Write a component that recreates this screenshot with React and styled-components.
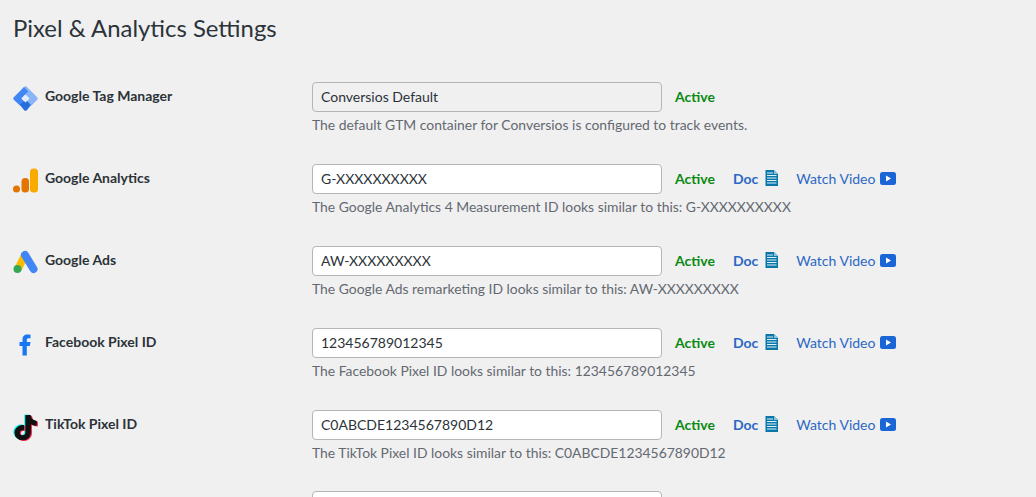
import React from 'react';
import styled, { createGlobalStyle } from 'styled-components';

const GlobalStyle = createGlobalStyle`
  html, body {
    margin: 0;
    height: 100%;
    overflow: hidden;
    background: #f0f0f1;
    font-family: Lato, "Open Sans", sans-serif;
  }
`;

const Page = styled.div`
  height: 497px;
  overflow: hidden;
  padding: 13px 0 0 13px;
  box-sizing: border-box;
`;

const Title = styled.h2`
  margin: 0 0 39px;
  font-size: 23.9px;
  line-height: 30px;
  font-weight: 400;
  color: #2c3338;
`;

const Row = styled.div`
  display: grid;
  grid-template-columns: 299px 1fr;
  height: 82px;
`;

const LastRow = styled(Row)`
  margin-top: -1px;
`;

const Label = styled.div`
  display: flex;
  align-items: flex-start;
  gap: 7px;
  font-size: 14px;
  font-weight: 700;
  line-height: 28px;
  color: #2c3338;
`;

const IconSlot = styled.span`
  width: 25px;
  height: 25px;
  margin-top: 4px;
  display: flex;
  align-items: center;
  justify-content: center;

  svg {
    overflow: visible;
  }
`;

const FieldLine = styled.div`
  display: flex;
  align-items: center;
  height: 30px;
`;

const Input = styled.input`
  width: 350px;
  height: 30px;
  box-sizing: border-box;
  padding: 0 8px 2px;
  border: 1px solid #b5b5b5;
  border-radius: 4px;
  font-family: inherit;
  font-size: 14px;
  color: #2c3338;
  background: ${({ disabled }) => (disabled ? '#f0f0f1' : '#fff')};
  opacity: 1;
`;

const Status = styled.span`
  margin: 0 0 2px 13px;
  font-size: 14px;
  font-weight: 700;
  color: #0a8a12;
`;

const DocLink = styled.a`
  margin: 0 0 2px 18px;
  display: flex;
  align-items: center;
  gap: 7px;
  font-size: 14px;
  font-weight: 700;
  color: #2b68c4;
`;

const VideoLink = styled.a`
  margin: 0 0 2px 18px;
  display: flex;
  align-items: center;
  gap: 5px;
  font-size: 14px;
  color: #2b68c4;
`;

const Help = styled.p`
  margin: 4px 0 0;
  font-size: 13.9px;
  line-height: 18px;
  color: #646970;
`;

const TagIcon = () => (
  <svg width="25" height="25" viewBox="0 0 25 25">
    <path d="M11 1 a2 2 0 0 1 3 0 L24 11 a2 2 0 0 1 0 3 L18 20 L13.5 15 L16 12.5 L8.5 5 Z" fill="#8ab4f8" />
    <path d="M11 1 L15 5.5 L8.5 12.5 L13 17 L7.5 20 L1 14 a2 2 0 0 1 0-3 Z" fill="#4285f4" />
    <path d="M7 19 L12.5 13.5 L18 19 L14 24 a2 2 0 0 1-3 0 Z" fill="#246fdb" />
    <path d="M12.5 8.5 L16.5 12.5 L12.5 16.5 L8.5 12.5 Z" fill="#e3edfc" />
  </svg>
);

const AnalyticsIcon = () => (
  <svg width="25" height="25" viewBox="0 0 25 25">
    <rect x="17" y="0.5" width="8" height="24" rx="3.5" fill="#f9ab00" />
    <rect x="8.5" y="10" width="7.5" height="14.5" rx="3.5" fill="#e37400" />
    <circle cx="3.5" cy="21" r="3.5" fill="#e37400" />
  </svg>
);

const AdsIcon = () => (
  <svg width="25" height="25" viewBox="0 0 25 25">
    <path d="M12 5 L5 19" stroke="#fbbc04" strokeWidth="7.5" fill="none" />
    <path d="M12 5 L20.5 19" stroke="#4285f4" strokeWidth="8" strokeLinecap="round" fill="none" />
    <circle cx="4.5" cy="19" r="4" fill="#34a853" />
  </svg>
);

const FacebookIcon = () => (
  <svg width="25" height="25" viewBox="0 0 25 25">
    <path d="M9.5 23.5 V14 H6.5 V10 H9.5 V7.5 C9.5 4 11.5 2.5 14.2 2.5 C15.5 2.5 16.5 2.6 17.5 2.8 V6.2 H15.5 C14 6.2 13.8 7 13.8 8 V10 H17.5 L16.8 14 H13.8 V23.5 Z" fill="#1877f2" />
  </svg>
);

const TIKTOK_PATH = 'M12.5 1 H16.4 C16.7 4 18.6 6 21.5 6.3 V10 C19.5 10 17.8 9.3 16.4 8.2 V16.5 C16.4 20.8 13.4 23.5 9.7 23.5 C5.9 23.5 3 20.5 3 16.8 C3 12.8 6.4 9.7 10.5 10.2 V14.2 C8.5 13.7 6.8 15 6.8 16.8 C6.8 18.5 8.1 19.7 9.7 19.7 C11.3 19.7 12.5 18.5 12.5 16.5 Z';

const TikTokIcon = () => (
  <svg width="25" height="25" viewBox="0 0 25 25">
    <g transform="translate(-1.5 0.5) scale(1.15 1.08)" strokeWidth="0.9" strokeLinejoin="round">
      <path d={TIKTOK_PATH} fill="#25f4ee" stroke="#25f4ee" transform="translate(-1 -0.6)" />
      <path d={TIKTOK_PATH} fill="#fe2c55" stroke="#fe2c55" transform="translate(1 0.6)" />
      <path d={TIKTOK_PATH} fill="#111" stroke="#111" />
    </g>
  </svg>
);

const DocIcon = () => (
  <svg width="13" height="16" viewBox="0 0 13 16">
    <path d="M0.5 0 H9 L13 4 V16 H0.5 Z" fill="#0b76a8" />
    <path d="M9 0 V4 H13 Z" fill="#8cc4de" />
    <path d="M2 3 H8 M2 5.5 H11.5 M2 8 H11.5 M2 10.5 H11.5 M2 13 H11.5" stroke="#dff0f8" strokeWidth="1" />
  </svg>
);

const VideoIcon = () => (
  <svg width="16" height="13" viewBox="0 0 16 13">
    <rect width="16" height="13" rx="2.5" fill="#1a66d6" />
    <path d="M6 3.5 L11 6.5 L6 9.5 Z" fill="#fff" />
  </svg>
);

const rows = [
  { name: 'Google Tag Manager', icon: <TagIcon />, value: 'Conversios Default', locked: true, help: 'The default GTM container for Conversios is configured to track events.' },
  { name: 'Google Analytics', icon: <AnalyticsIcon />, value: 'G-XXXXXXXXXX', help: 'The Google Analytics 4 Measurement ID looks similar to this: G-XXXXXXXXXX' },
  { name: 'Google Ads', icon: <AdsIcon />, value: 'AW-XXXXXXXXX', help: 'The Google Ads remarketing ID looks similar to this: AW-XXXXXXXXX' },
  { name: 'Facebook Pixel ID', icon: <FacebookIcon />, value: '123456789012345', help: 'The Facebook Pixel ID looks similar to this: 123456789012345' },
  { name: 'TikTok Pixel ID', icon: <TikTokIcon />, value: 'C0ABCDE1234567890D12', help: 'The TikTok Pixel ID looks similar to this: C0ABCDE1234567890D12' },
];

const App = () => (
  <Page>
    <GlobalStyle />
    <Title>Pixel &amp; Analytics Settings</Title>
    {rows.map((row) => (
      <Row key={row.name}>
        <Label>
          <IconSlot>{row.icon}</IconSlot>
          {row.name}
        </Label>
        <div>
          <FieldLine>
            <Input defaultValue={row.value} disabled={row.locked} />
            <Status>Active</Status>
            {!row.locked && (
              <>
                <DocLink>Doc <DocIcon /></DocLink>
                <VideoLink>Watch Video <VideoIcon /></VideoLink>
              </>
            )}
          </FieldLine>
          <Help>{row.help}</Help>
        </div>
      </Row>
    ))}
    <LastRow>
      <div />
      <FieldLine>
        <Input />
      </FieldLine>
    </LastRow>
  </Page>
);

export default App;
